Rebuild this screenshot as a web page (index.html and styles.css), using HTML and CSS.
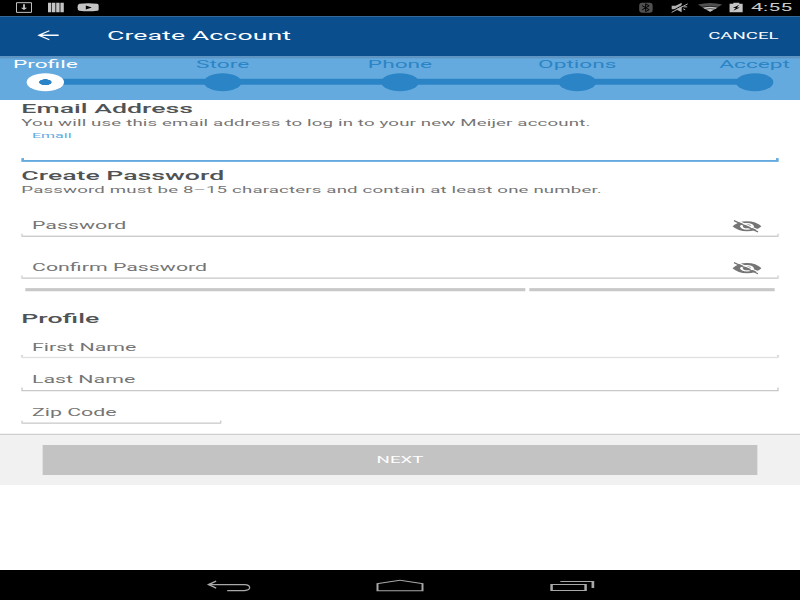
FILE: index.html
```html
<!DOCTYPE html>
<html lang="en">
<head>
<meta charset="utf-8">
<title>Create Account</title>
<link rel="stylesheet" href="styles.css">
</head>
<body>
<div class="device">
<div class="screen">
  <div class="status">
    <svg class="ico i-down" viewBox="16 2 16 12" preserveAspectRatio="none"><path d="M16.500 2.800H31.500V12.500H16.500z" fill="none" stroke="#c4c4c4" stroke-width="1"/><path d="M23.100 4.500h1.800v3.500h2.400L24 10.200 20.700 8h2.400z" fill="#c4c4c4"/></svg>
    <svg class="ico i-bars" viewBox="48 2 16 12" preserveAspectRatio="none"><path d="M48 3h3.300v9.500H48zM52 3h3.400v9.500H52zM56.200 3h3.400v9.500h-3.400zM60.400 3h3.400v9.500h-3.400z" fill="#c4c4c4"/></svg>
    <svg class="ico i-tube" viewBox="77 2 22 12" preserveAspectRatio="none"><path d="M79 4Q88 3 97 4q2 .5 2 3.500t-2 3.500q-9 1-18 0-2-.5-2-3.500T79 4z" fill="#c4c4c4"/><path d="M85.500 5.600l6 2-6 2z" fill="#000"/></svg>
    <span class="grow"></span>
    <svg class="ico i-bt" viewBox="639 2 14 12" preserveAspectRatio="none"><rect x="639.500" y="3" width="13.500" height="10" rx="3" fill="#505050"/><path d="M642.500 5.800l7 4-3.500 1.900V4l3.500 1.900-7 4" fill="none" stroke="#000" stroke-width="1"/></svg>
    <svg class="ico i-mute" viewBox="670 2 18 12" preserveAspectRatio="none"><path d="M671 6h4l6-3v9.500l-6-3h-4z" fill="#b0b0b0"/><path d="M670 12L686 3" stroke="#000" stroke-width="1"/><path d="M671 12.500L687 4M683 7h3.500M682.500 9l2 1" fill="none" stroke="#b0b0b0" stroke-width="1"/></svg>
    <svg class="ico i-wifi" viewBox="697 2 26 12" preserveAspectRatio="none"><path d="M697.500 4.700q12.200-3.200 24.500 0L709.800 12z" fill="#505050"/><path d="M702 7.700q7.800-1.800 15.500 0L709.800 12z" fill="#c4c4c4"/><path d="M701 7.400q8.700-2 17.500 0M705 9.400q5-1.300 10 0" fill="none" stroke="#000" stroke-width=".6"/></svg>
    <svg class="ico i-batt" viewBox="729 2 14 12" preserveAspectRatio="none"><path d="M729 4h4V3h6v1h4v8.500h-14z" fill="#c4c4c4"/><path d="M739 4.800l-6.500 3.400h3l-2.500 2.800 6.500-3.400h-3z" fill="#000"/></svg>
    <span class="clock">4:55</span>
  </div>
  <div class="appbar">
    <svg class="ico back" viewBox="37 29 22 14" preserveAspectRatio="none"><path d="M59 35.500H38.500M49 31l-10.500 4.500L49 40" fill="none" stroke="#fff" stroke-width="1.300"/></svg>
    <h1 class="title">Create Account</h1>
    <span class="cancel">CANCEL</span>
  </div>
  <div class="stepper">
    <div class="step on"><span class="name">Profile</span><span class="dot"></span></div>
    <div class="step"><span class="name">Store</span><span class="dot"></span></div>
    <div class="step"><span class="name">Phone</span><span class="dot"></span></div>
    <div class="step"><span class="name">Options</span><span class="dot"></span></div>
    <div class="step"><span class="name">Accept</span><span class="dot"></span></div>
  </div>
  <div class="form">
    <h2 class="h h-email">Email Address</h2>
    <p class="hint">You will use this email address to log in to your new Meijer account.</p>
    <div class="field focus"><span>Email</span></div>
    <h2 class="h h-pass">Create Password</h2>
    <p class="hint">Password must be 8–15 characters and contain at least one number.</p>
    <div class="field pw1"><span>Password</span>
      <svg class="ico eye" viewBox="732 219 30 14" preserveAspectRatio="none"><path d="M732.500 226Q738 220.800 747 220.800T761.500 226Q756 231 747 231T732.500 226z" fill="#757575"/><ellipse cx="747" cy="226" rx="6.800" ry="3.300" fill="#fff"/><ellipse cx="747" cy="226" rx="4" ry="2" fill="#757575"/><path d="M735.500 219.500L760 230.300" stroke="#fff" stroke-width="1.100"/><path d="M734 220.300L758 231.500" stroke="#757575" stroke-width="1.300"/></svg></div>
    <div class="field pw2"><span>Confirm Password</span>
      <svg class="ico eye" viewBox="732 219 30 14" preserveAspectRatio="none"><path d="M732.500 226Q738 220.800 747 220.800T761.500 226Q756 231 747 231T732.500 226z" fill="#757575"/><ellipse cx="747" cy="226" rx="6.800" ry="3.300" fill="#fff"/><ellipse cx="747" cy="226" rx="4" ry="2" fill="#757575"/><path d="M735.500 219.500L760 230.300" stroke="#fff" stroke-width="1.100"/><path d="M734 220.300L758 231.500" stroke="#757575" stroke-width="1.300"/></svg></div>
    <div class="strength"><i></i><i></i></div>
    <h2 class="h h-prof">Profile</h2>
    <div class="field name1"><span>First Name</span></div>
    <div class="field name2"><span>Last Name</span></div>
    <div class="field zip"><span>Zip Code</span></div>
  </div>
  <div class="footer"><div class="next">NEXT</div></div>
  <div class="nav">
    <svg class="ico n-back" viewBox="207 578 45 14" preserveAspectRatio="none"><path d="M209 584.500H245q5 .3 5 3t-5 3H227.500" fill="none" stroke="#a8a8a8" stroke-width="1.300"/><path d="M216.500 581l-7.500 3.500 7.500 3.500" fill="none" stroke="#a8a8a8" stroke-width="1.500"/></svg>
    <svg class="ico n-home" viewBox="376 578 48 14" preserveAspectRatio="none"><path d="M376.500 583.200L400 579.600l23.500 3.600v8h-47zM378.500 583.800v6.400h43v-6.400L400 580.700z" fill="#a8a8a8" fill-rule="evenodd"/></svg>
    <svg class="ico n-recent" viewBox="549 578 46 14" preserveAspectRatio="none"><path d="M550 584h36.500v7H550zM552.500 585v5h31.500v-5zM560 581h34v7h-2.800v-6H560z" fill="#a8a8a8" fill-rule="evenodd"/></svg>
  </div>
</div>
</div>
</body>
</html>
```
FILE: styles.css
```css
* { box-sizing: border-box; }
html, body { margin: 0; background: #fff; }
h1, h2, p { margin: 0; }

.device { width: 800px; height: 600px; overflow: hidden; }

/* 600x960 tablet layout stretched over the 800x600 window */
.screen {
  width: 600px;
  height: 960px;
  margin-bottom: -360px;
  transform: scale(1.333333, .625);
  transform-origin: 0 0;
  display: flex;
  flex-direction: column;
  background: #fff;
  font-family: Roboto, sans-serif;
  color: #757575;
}
.ico { display: block; flex: none; }
.grow { flex: 1; }

.status { height: 25.6px; flex: none; background: #000; display: flex; align-items: center; padding: 0 6px 0 12px; }
.status .ico { height: 19.2px; }
.i-down { width: 12px; }
.i-bars { width: 12px; margin-left: 12px; }
.i-tube { width: 16.5px; margin-left: 9.75px; }
.i-bt { width: 10.5px; }
.i-mute { width: 13.5px; margin-left: 12.75px; }
.i-wifi { width: 19.5px; margin-left: 6.75px; }
.i-batt { width: 10.5px; margin-left: 4.5px; }
.clock { width: 30.75px; margin-left: 6px; font-size: 16px; line-height: 26.4px; color: #c8c8c8; white-space: nowrap; }

.appbar { height: 64px; flex: none; background: #0a4e8e; display: flex; align-items: center; padding: 0 16px 0 27.75px; color: #fff; }
.back { width: 16.5px; height: 22.4px; }
.title { margin-left: 36px; font-size: 20px; font-weight: 400; line-height: 62px; padding-bottom: 1px; letter-spacing: .06px; flex: 1; }
.cancel { font-size: 14px; }

.stepper {
  height: 70.4px;
  flex: none;
  display: flex;
  justify-content: space-between;
  padding: 0 1px;
  background:
    linear-gradient(#5587b4, rgba(101, 170, 222, 0)) 0 0 / 100% 5px no-repeat,
    linear-gradient(#2b84c6, #2b84c6) 34px 36.8px / 532px 9.6px no-repeat,
    #65aade;
}
.step { width: 66px; display: flex; flex-direction: column; align-items: center; color: #2b84c6; }
.name { font-size: 17px; line-height: 27.2px; height: 27.2px; }
.dot { width: 28px; height: 28.8px; border-radius: 50%; background: #2b84c6; }
.on { color: #fff; }
.on .dot { background: radial-gradient(circle, #2b84c6 4.4px, #fff 5px); }

.form { height: 534.4px; flex: none; padding: 0 16px; display: flex; flex-direction: column; }
.h { font-size: 20px; font-weight: 500; color: #505355; line-height: 24px; white-space: nowrap; }
.h-email { margin-top: 2.4px; }
.h-pass { margin-top: 10px; }
.h-prof { margin-top: 31.9px; }
.hint { margin-top: 2px; font-size: 14px; line-height: 16px; letter-spacing: .11px; white-space: nowrap; }

/* field with an open-topped bracket underline */
.field {
  position: relative;
  flex: none;
  display: flex;
  justify-content: space-between;
  align-items: flex-end;
  padding: 0 13px 0 8px;
  border-bottom: 2px solid #c8c8c8;
  font-size: 16px;
  line-height: 20px;
}
.field::after {
  content: "";
  position: absolute;
  left: 0; right: 0; bottom: 0;
  height: 3.2px;
  border: solid #c8c8c8;
  border-width: 0 1px;
}
.field > span { margin-bottom: 5.2px; }
.eye { width: 22.5px; height: 22.4px; margin-bottom: 3.8px; }
.focus { height: 54.8px; padding-top: 5.3px; align-items: flex-start; border-bottom: 3.2px solid #65aade; font-size: 12px; line-height: 14px; color: #65aade; }
.focus::after { border-color: #65aade; border-width: 0 2px; }
.pw1 { height: 68px; }
.pw2 { height: 67.2px; }
.strength { display: flex; gap: 3px; margin: 14.4px 3px 0; height: 4.8px; flex: none; }
.strength i { flex: 375; background: #c8c8c8; }
.strength i + i { flex: 184.500; }
.name1 { height: 51.3px; border-bottom-color: #e0e0e0; }
.name2 { height: 52.8px; }
.zip { height: 52.8px; width: 150px; }

.footer { height: 81.6px; flex: none; background: #f1f1f1; border-top: 2px solid #d0d0d0; padding: 15.6px 32px; }
.next { height: 48px; background: #c3c3c3; color: #fff; font-size: 14px; line-height: 49px; text-align: center; }

.nav { height: 48px; margin-top: auto; flex: none; background: #000; display: flex; align-items: flex-start; padding: 12.8px 0 0 155.25px; }
.nav .ico { height: 22.4px; }
.n-back { width: 33.75px; }
.n-home { width: 36px; margin-left: 93px; }
.n-recent { width: 34.5px; margin-left: 93.75px; }
```
